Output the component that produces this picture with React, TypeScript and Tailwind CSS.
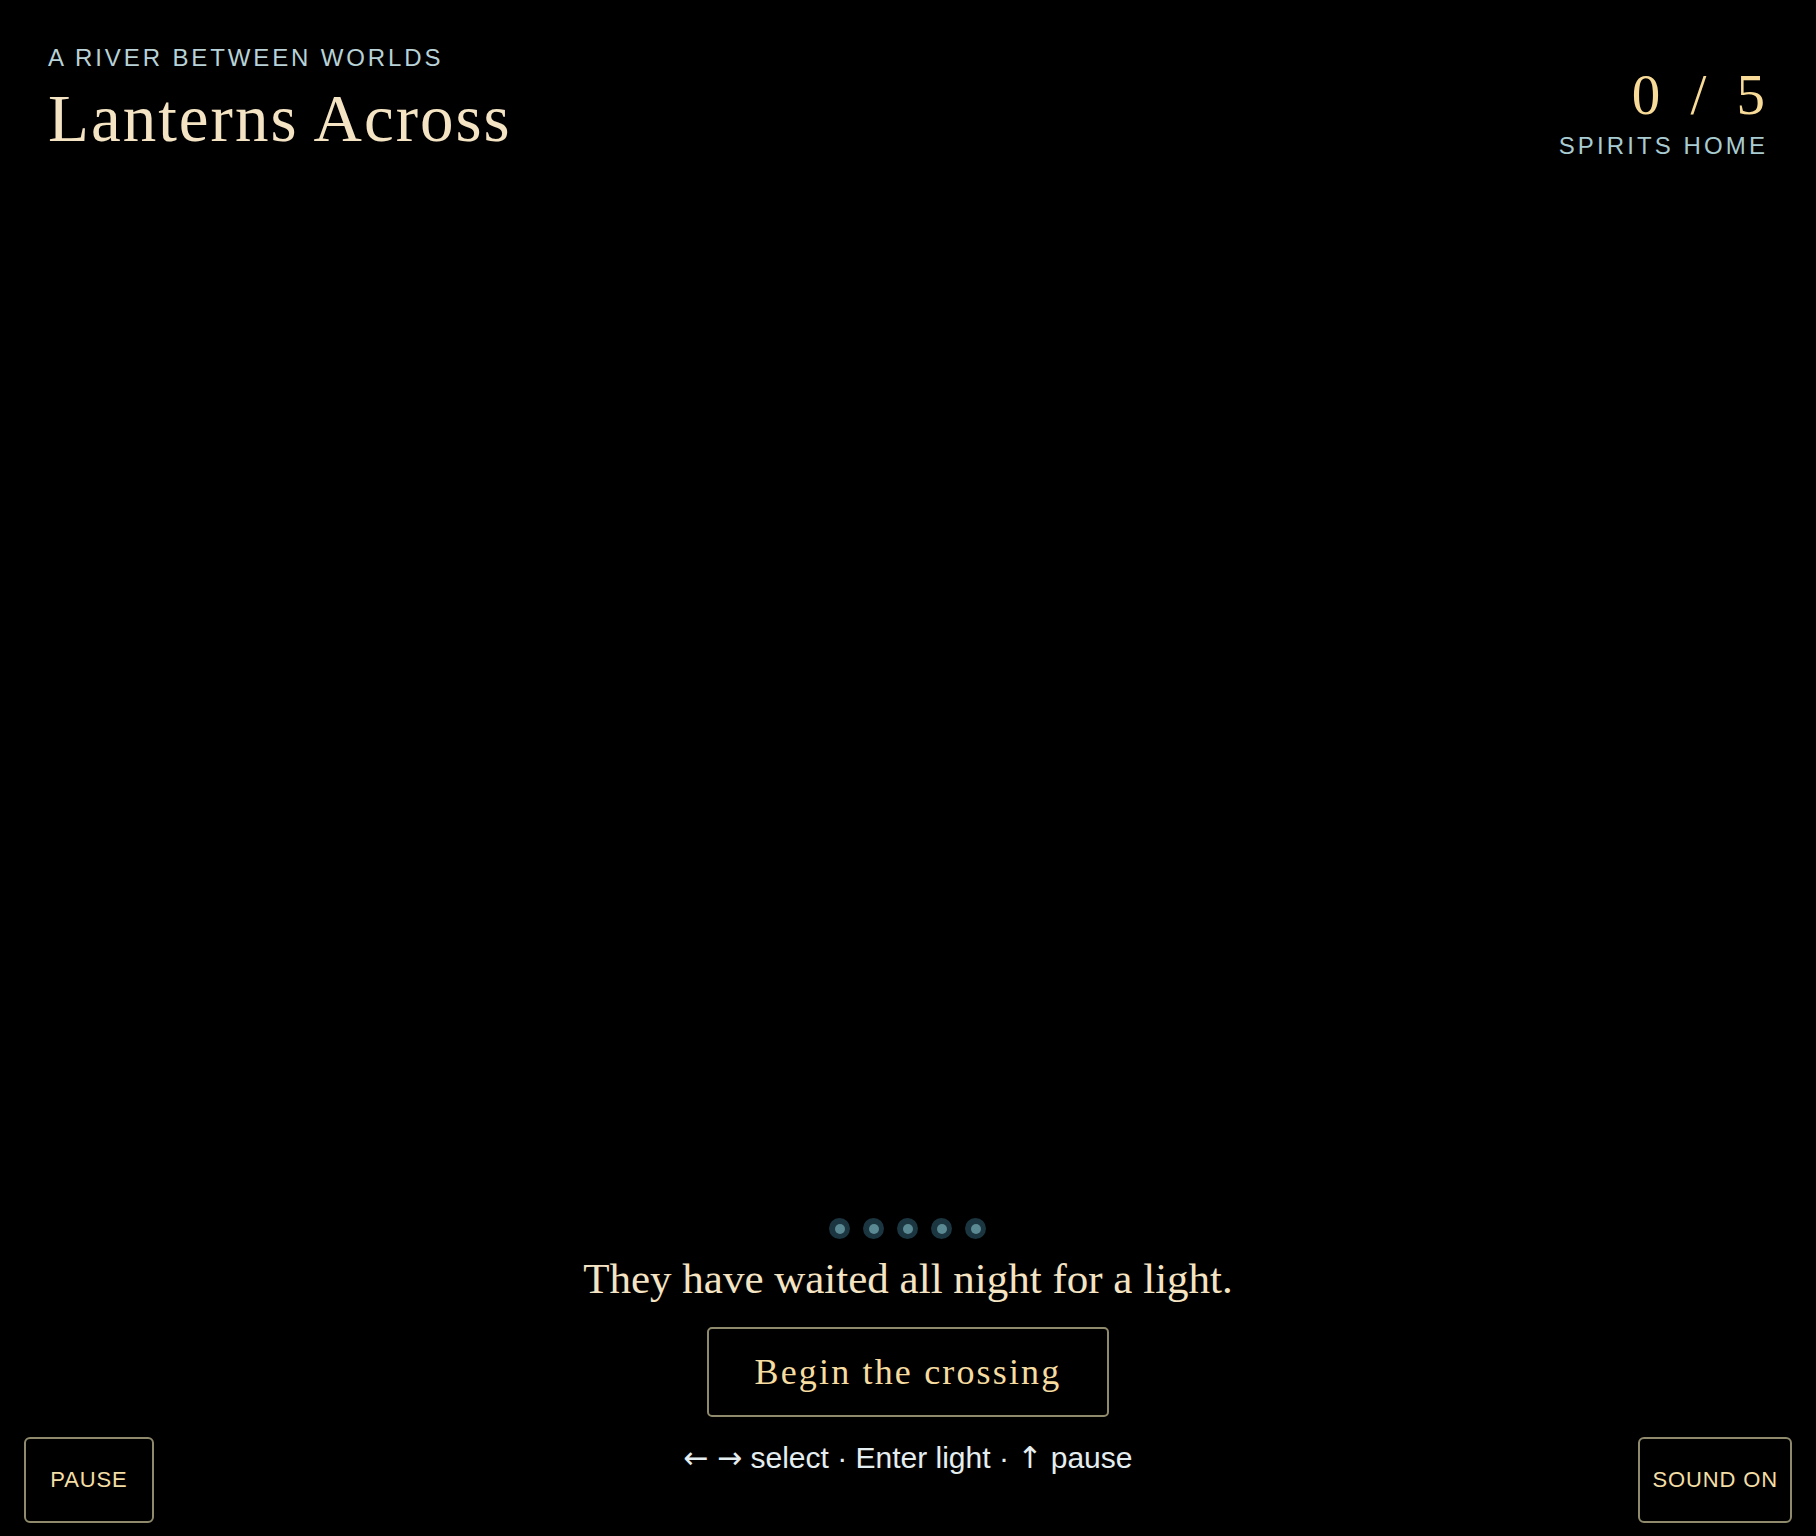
import React from 'react';

function Dots({ count }: { count: number }) {
  return (
    <div className="flex items-center gap-[13px]">
      {Array.from({ length: count }).map((_, i) => (
        <span key={i} className="flex h-[21px] w-[21px] items-center justify-center rounded-full bg-[#1b3640]">
          <span className="h-[10px] w-[10px] rounded-full bg-[#5a8893]" />
        </span>
      ))}
    </div>
  );
}

function CornerButton({ label, className }: { label: string; className?: string }) {
  return (
    <button
      className={`flex h-[86px] min-w-[130px] items-center justify-center rounded-[6px] border-2 border-[#8f8a6b] px-[12px] text-[22px] leading-none tracking-[0.04em] text-[#f3dea6] ${className ?? ''}`}
    >
      {label}
    </button>
  );
}

export default function App() {
  return (
    <div className="flex h-screen flex-col bg-black font-['Liberation_Sans',Arial,sans-serif]">
      <header className="flex items-start justify-between pl-12 pr-[51px] pt-[46px]">
        <div>
          <p className="text-[24px] leading-none tracking-[0.12em] text-[#b8d2d7]">A RIVER BETWEEN WORLDS</p>
          <h1 className="mt-[15px] font-['Liberation_Serif','Times_New_Roman',serif] text-[67px] leading-none tracking-[0.03em] text-[#f4e4c3]">
            Lanterns Across
          </h1>
        </div>
        <div className="mt-[20px] flex flex-col items-end">
          <span className="-mr-[0.14em] font-['Liberation_Serif','Times_New_Roman',serif] text-[57px] leading-none tracking-[0.14em] text-[#f8db98]">
            0 / 5
          </span>
          <span className="-mr-[0.13em] mt-[11px] text-[24px] leading-none tracking-[0.13em] text-[#a8ccd2]">
            SPIRITS HOME
          </span>
        </div>
      </header>

      <div className="flex-1" />

      <footer className="grid grid-cols-[1fr_auto_1fr] items-end px-6 pb-[13px]">
        <CornerButton label="PAUSE" className="justify-self-start" />
        <div className="flex flex-col items-center pb-[50px]">
          <Dots count={5} />
          <p className="mt-[18px] font-['Liberation_Serif','Times_New_Roman',serif] text-[43px] leading-none text-[#f4e4c3]">
            They have waited all night for a light.
          </p>
          <button className="mt-[27px] flex h-[90px] items-center rounded-[5px] border-2 border-[#8f8a6b] px-[46px] font-['Liberation_Serif','Times_New_Roman',serif] text-[36px] leading-none tracking-[0.06em] text-[#f6dca0]">
            Begin the crossing
          </button>
          <p className="mt-[26px] text-[30px] leading-none text-[#e4edef]">
            <span className="font-['DejaVu_Sans',sans-serif]">←</span>{' '}
            <span className="font-['DejaVu_Sans',sans-serif]">→</span> select · Enter light ·{' '}
            <span className="font-['DejaVu_Sans',sans-serif]">↑</span> pause
          </p>
        </div>
        <CornerButton label="SOUND ON" className="justify-self-end" />
      </footer>
    </div>
  );
}
